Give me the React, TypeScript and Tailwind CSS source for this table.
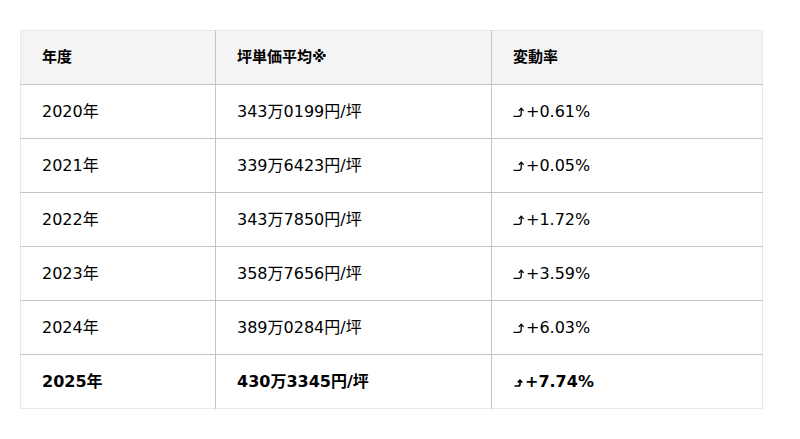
import React from "react";

interface Fila {
  anio: string;
  precio: string;
  cambio: string;
}

const filas: Fila[] = [
  { anio: "2020年", precio: "343万0199円/坪", cambio: "+0.61%" },
  { anio: "2021年", precio: "339万6423円/坪", cambio: "+0.05%" },
  { anio: "2022年", precio: "343万7850円/坪", cambio: "+1.72%" },
  { anio: "2023年", precio: "358万7656円/坪", cambio: "+3.59%" },
  { anio: "2024年", precio: "389万0284円/坪", cambio: "+6.03%" },
];

// flecha "⤴" dibujada a mano (la fuente del sistema la pinta distinta)
function Flecha({ small = false }: { small?: boolean }) {
  return small ? (
    <svg width="12" height="8" viewBox="0 0 12 8" className="inline-block align-baseline">
      <path d="M1.5 7 H5 Q7 7 7 5 V1.6" fill="none" stroke="black" strokeWidth="1.7" />
      <path d="M4.7 3.5 L7 1.1 L9.3 3.5" fill="none" stroke="black" strokeWidth="1.6" />
    </svg>
  ) : (
    <svg width="13" height="10" viewBox="0 0 13 10" className="inline-block align-baseline">
      <path d="M0.5 9.3 H6 Q8.2 9.3 8.2 7.1 V1.6" fill="none" stroke="black" strokeWidth="1.3" />
      <path d="M5.8 3.9 L8.2 1.3 L10.6 3.9" fill="none" stroke="black" strokeWidth="1.3" />
    </svg>
  );
}

export default function App() {
  return (
    <div
      className="min-h-screen bg-white pt-[30px] px-[20px] text-black text-[16px]"
      style={{ fontFamily: '"DejaVu Sans", "Noto Sans CJK JP", sans-serif' }}
    >
      <table className="w-[742px] border-collapse table-fixed border border-[#e8e8e8]">
        <colgroup>
          <col className="w-[195px]" />
          <col className="w-[276px]" />
          <col className="w-[271px]" />
        </colgroup>
        <thead>
          <tr className="bg-[#f4f4f4] h-[54px] border-b border-[#c4c4c4]">
            <th className="text-left font-bold text-[15px] pl-[21px] border-r border-[#c4c4c4]">年度</th>
            <th className="text-left font-bold text-[15px] pl-[21px] border-r border-[#c4c4c4]">坪単価平均※</th>
            <th className="text-left font-bold text-[15px] pl-[21px]">変動率</th>
          </tr>
        </thead>
        <tbody>
          {filas.map((f) => (
            <tr key={f.anio} className="h-[54px] border-b border-[#c4c4c4]">
              <td className="pl-[21px] border-r border-[#c4c4c4]">{f.anio}</td>
              <td className="pl-[21px] border-r border-[#c4c4c4]">{f.precio}</td>
              <td className="pl-[21px]">
                <Flecha />
                {f.cambio}
              </td>
            </tr>
          ))}
          <tr className="h-[54px] font-bold">
            <td className="pl-[21px] border-r border-[#c4c4c4]">2025年</td>
            <td className="pl-[21px] border-r border-[#c4c4c4]">430万3345円/坪</td>
            <td className="pl-[21px]">
              <Flecha small />
              +7.74%
            </td>
          </tr>
        </tbody>
      </table>
    </div>
  );
}
